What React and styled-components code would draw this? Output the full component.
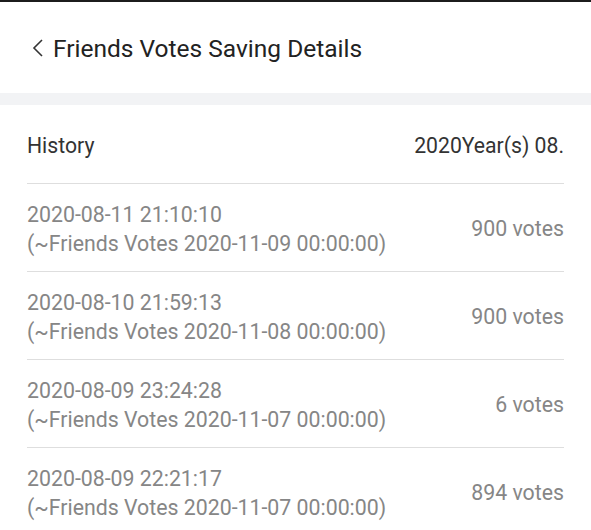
import React from "react";
import styled, { createGlobalStyle } from "styled-components";

const Global = createGlobalStyle`
  html, body { margin: 0; padding: 0; background: #fff; }
  body { font-family: Roboto, "Noto Sans", Arial, sans-serif; -webkit-font-smoothing: antialiased; }
`;

const Page = styled.div`
  width: 591px;
  min-height: 530px;
  background: #fff;
  border-top: 2px solid #1c1c1c;
  box-sizing: border-box;
`;

const Header = styled.header`
  height: 91px;
  display: flex;
  align-items: center;
  padding-left: 31px;
  padding-top: 1px;
  gap: 8px;
  box-sizing: border-box;
`;

const Back = styled.svg`
  width: 14px;
  height: 20px;
  flex: none;
`;

const Title = styled.h1`
  margin: 0;
  font-size: 24.5px;
  font-weight: 400;
  color: #222;
`;

const Band = styled.div`
  height: 12px;
  background: #f2f3f5;
`;

const List = styled.div`
  padding: 0 27px;
`;

const HeadRow = styled.div`
  height: 79px;
  display: flex;
  align-items: center;
  justify-content: space-between;
  border-bottom: 1px solid #dedede;
  font-size: 21.2px;
  color: #333;
  box-sizing: border-box;
  padding-top: 3px;
`;

const Row = styled.div`
  height: 88px;
  display: flex;
  align-items: center;
  justify-content: space-between;
  border-bottom: 1px solid #dedede;
  box-sizing: border-box;
  color: #868686;
  font-size: 21.3px;
  padding-top: 2px;
`;

const Lines = styled.div`
  display: flex;
  flex-direction: column;
  line-height: 29px;
`;

const Votes = styled.span`
  font-size: 21.3px;
  color: #868686;
`;

const rows = [
  ["2020-08-11 21:10:10", "(~Friends Votes 2020-11-09 00:00:00)", "900 votes"],
  ["2020-08-10 21:59:13", "(~Friends Votes 2020-11-08 00:00:00)", "900 votes"],
  ["2020-08-09 23:24:28", "(~Friends Votes 2020-11-07 00:00:00)", "6 votes"],
  ["2020-08-09 22:21:17", "(~Friends Votes 2020-11-07 00:00:00)", "894 votes"],
];

export default function App() {
  return (
    <Page>
      <Global />
      <Header>
        <Back viewBox="0 0 14 20">
          <path d="M11 2 L3 10 L11 18" fill="none" stroke="#333" strokeWidth="1.6" />
        </Back>
        <Title>Friends Votes Saving Details</Title>
      </Header>
      <Band />
      <List>
        <HeadRow>
          <span>History</span>
          <span>2020Year(s) 08.</span>
        </HeadRow>
        {rows.map(([a, b, v], i) => (
          <Row key={i}>
            <Lines>
              <span>{a}</span>
              <span>{b}</span>
            </Lines>
            <Votes>{v}</Votes>
          </Row>
        ))}
      </List>
    </Page>
  );
}
